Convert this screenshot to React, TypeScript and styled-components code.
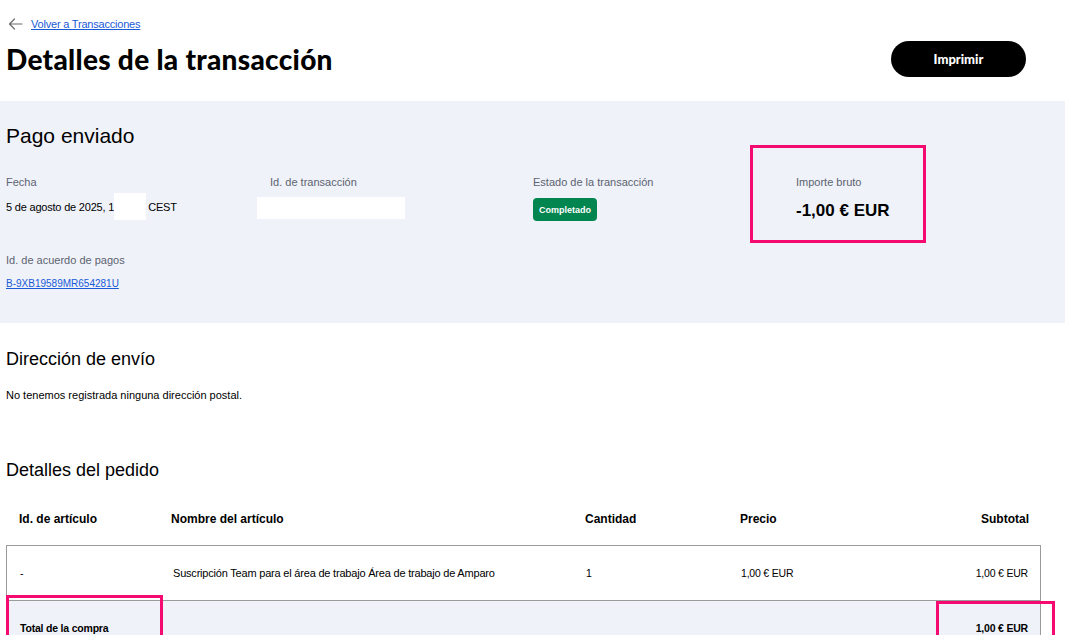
import React from "react";
import styled, { createGlobalStyle } from "styled-components";

const GlobalStyle = createGlobalStyle`
  * { box-sizing: border-box; }
  html, body {
    margin: 0;
    padding: 0;
    background: #ffffff;
  }
  body {
    font-family: "Liberation Sans", Arial, sans-serif;
    color: #000000;
  }
`;

const BackArrow: React.FC = () => (
  <svg width="15" height="12" viewBox="0 0 15 12" fill="none">
    <path
      d="M14 6H1.5M6.5 1L1.5 6l5 5"
      stroke="#6b6b6b"
      strokeWidth="1.2"
      strokeLinecap="round"
      strokeLinejoin="round"
    />
  </svg>
);

const App: React.FC = () => {
  return (
    <>
      <GlobalStyle />
      <StyledPage>
        <StyledTopBar>
          <StyledBackRow>
            <BackArrow />
            <StyledLink href="#">Volver a Transacciones</StyledLink>
          </StyledBackRow>
          <StyledTitleRow>
            <StyledTitle>Detalles de la transacción</StyledTitle>
            <StyledPrintButton type="button">Imprimir</StyledPrintButton>
          </StyledTitleRow>
        </StyledTopBar>

        <StyledSummaryPanel>
          <StyledPanelTitle>Pago enviado</StyledPanelTitle>
          <StyledFieldGrid>
            <StyledField>
              <StyledLabel>Fecha</StyledLabel>
              <StyledDateValue>
                5 de agosto de 2025, 1
                <StyledRedaction $w={32} $h={27} />
                CEST
              </StyledDateValue>
            </StyledField>
            <StyledField>
              <StyledLabel>Id. de transacción</StyledLabel>
              <StyledIdRedaction $w={148} $h={22} />
            </StyledField>
            <StyledField>
              <StyledLabel>Estado de la transacción</StyledLabel>
              <StyledStatusBadge>Completado</StyledStatusBadge>
            </StyledField>
            <StyledField>
              <StyledLabel>Importe bruto</StyledLabel>
              <StyledAmount>-1,00 € EUR</StyledAmount>
              <StyledHighlight $top={-30} $left={-46} $w={176} $h={98} />
            </StyledField>
            <StyledField>
              <StyledLabel>Id. de acuerdo de pagos</StyledLabel>
              <StyledAgreementLink href="#">B-9XB19589MR654281U</StyledAgreementLink>
            </StyledField>
          </StyledFieldGrid>
        </StyledSummaryPanel>

        <StyledSection $gap={25}>
          <StyledSectionTitle>Dirección de envío</StyledSectionTitle>
          <StyledText>No tenemos registrada ninguna dirección postal.</StyledText>
        </StyledSection>

        <StyledSection $gap={57}>
          <StyledSectionTitle>Detalles del pedido</StyledSectionTitle>
        </StyledSection>

        <StyledTable>
          <StyledHeaderRow>
            <span>Id. de artículo</span>
            <span>Nombre del artículo</span>
            <span>Cantidad</span>
            <span>Precio</span>
            <StyledCell $right>Subtotal</StyledCell>
          </StyledHeaderRow>
          <StyledTableBody>
            <StyledItemRow>
              <span>-</span>
              <StyledCell $wide>
                Suscripción Team para el área de trabajo Área de trabajo de Amparo
              </StyledCell>
              <span>1</span>
              <span>1,00 € EUR</span>
              <StyledCell $right>1,00 € EUR</StyledCell>
            </StyledItemRow>
            <StyledTotalRow>
              <span>Total de la compra</span>
              <span />
              <span />
              <span />
              <StyledCell $right>1,00 € EUR</StyledCell>
            </StyledTotalRow>
            <StyledHighlight $top={49} $left={-1} $w={157} $h={50} />
            <StyledHighlight $top={55} $left={929} $w={119} $h={45} />
          </StyledTableBody>
        </StyledTable>
      </StyledPage>
    </>
  );
};

const StyledPage = styled.div`
  width: 100%;
  min-height: 720px;
  background: #ffffff;
`;

const StyledTopBar = styled.header`
  padding: 17px 39px 0 6px;
`;

const StyledBackRow = styled.div`
  display: flex;
  align-items: center;
  gap: 8px;
  height: 14px;
  padding-left: 2px;
`;

const StyledLink = styled.a`
  font-size: 11px;
  line-height: 14px;
  color: #1a5ad7;
  text-decoration: underline;
  letter-spacing: -0.2px;
`;

const StyledTitleRow = styled.div`
  display: flex;
  align-items: center;
  justify-content: space-between;
  height: 36px;
  margin-top: 10px;
`;

const StyledTitle = styled.h1`
  margin: 0;
  font-family: "Lato", "Liberation Sans", sans-serif;
  font-weight: 900;
  font-size: 28px;
  line-height: 36px;
  letter-spacing: 0.3px;
  color: #000000;
`;

const StyledPrintButton = styled.button`
  width: 135px;
  height: 36px;
  border: none;
  border-radius: 18px;
  background: #000000;
  color: #ffffff;
  font-family: "Lato", "Liberation Sans", sans-serif;
  font-weight: 900;
  font-size: 13px;
  cursor: pointer;
`;

const StyledSummaryPanel = styled.section`
  margin-top: 24px;
  background: #eff2f9;
  padding: 23px 6px 32px;
`;

const StyledPanelTitle = styled.h2`
  margin: 0;
  font-size: 21px;
  line-height: 24px;
  font-weight: 400;
`;

const StyledFieldGrid = styled.div`
  display: grid;
  grid-template-columns: 264px 263px 263px 1fr;
  row-gap: 32px;
  margin-top: 27px;
`;

const StyledField = styled.div`
  position: relative;
  display: flex;
  flex-direction: column;
  align-items: flex-start;
`;

const StyledLabel = styled.span`
  font-size: 11px;
  line-height: 14px;
  color: #5c6370;
`;

const StyledDateValue = styled.div`
  display: flex;
  align-items: center;
  height: 27px;
  margin-top: 4px;
  font-size: 11px;
  letter-spacing: -0.2px;
`;

const StyledRedaction = styled.span<{ $w: number; $h: number }>`
  display: inline-block;
  width: ${(p) => p.$w}px;
  height: ${(p) => p.$h}px;
  background: #ffffff;
  margin-right: 2px;
`;

const StyledIdRedaction = styled(StyledRedaction)`
  margin-top: 8px;
  margin-left: -13px;
`;

const StyledStatusBadge = styled.span`
  display: inline-flex;
  align-items: center;
  height: 23px;
  margin-top: 9px;
  padding: 0 6px;
  border-radius: 4px;
  background: #03854f;
  color: #ffffff;
  font-size: 9px;
  font-weight: 700;
`;

const StyledAmount = styled.span`
  margin-top: 12px;
  font-size: 17px;
  line-height: 20px;
  font-weight: 700;
`;

const StyledAgreementLink = styled.a`
  margin-top: 10px;
  font-size: 10px;
  line-height: 14px;
  color: #1a5ad7;
  text-decoration: underline;
`;

const StyledHighlight = styled.div<{ $top: number; $left: number; $w: number; $h: number }>`
  position: absolute;
  top: ${(p) => p.$top}px;
  left: ${(p) => p.$left}px;
  width: ${(p) => p.$w}px;
  height: ${(p) => p.$h}px;
  border: 3px solid #f50a72;
  pointer-events: none;
`;

const StyledSection = styled.section<{ $gap: number }>`
  margin-top: ${(p) => p.$gap}px;
  padding: 0 6px;
`;

const StyledSectionTitle = styled.h2`
  margin: 0;
  font-size: 18px;
  line-height: 22px;
  font-weight: 400;
`;

const StyledText = styled.p`
  margin: 18px 0 0;
  font-size: 11px;
  line-height: 14px;
`;

const StyledTable = styled.div`
  margin: 12px 24px 0 6px;
`;

const rowGrid = `
  display: grid;
  grid-template-columns: 152px 414px 155px 1fr 1fr;
  align-items: center;
  padding: 0 12px 0 13px;
`;

const StyledHeaderRow = styled.div`
  ${rowGrid}
  height: 52px;
  font-size: 12px;
  line-height: 16px;
  font-weight: 700;
`;

const StyledTableBody = styled.div`
  position: relative;
  border: 1px solid #9b9b9b;
`;

const StyledItemRow = styled.div`
  ${rowGrid}
  height: 55px;
  border-bottom: 1px solid #9b9b9b;
  font-size: 10.5px;
  letter-spacing: -0.2px;
`;

const StyledTotalRow = styled.div`
  ${rowGrid}
  height: 53px;
  background: #eff2f9;
  font-size: 10.5px;
  font-weight: 700;
  letter-spacing: -0.2px;
`;

const StyledCell = styled.span<{ $right?: boolean; $wide?: boolean }>`
  justify-self: ${(p) => (p.$right ? "end" : "start")};
  font-size: ${(p) => (p.$wide ? "11px" : "inherit")};
  padding-left: ${(p) => (p.$wide ? "1px" : "0")};
`;

export default App;
